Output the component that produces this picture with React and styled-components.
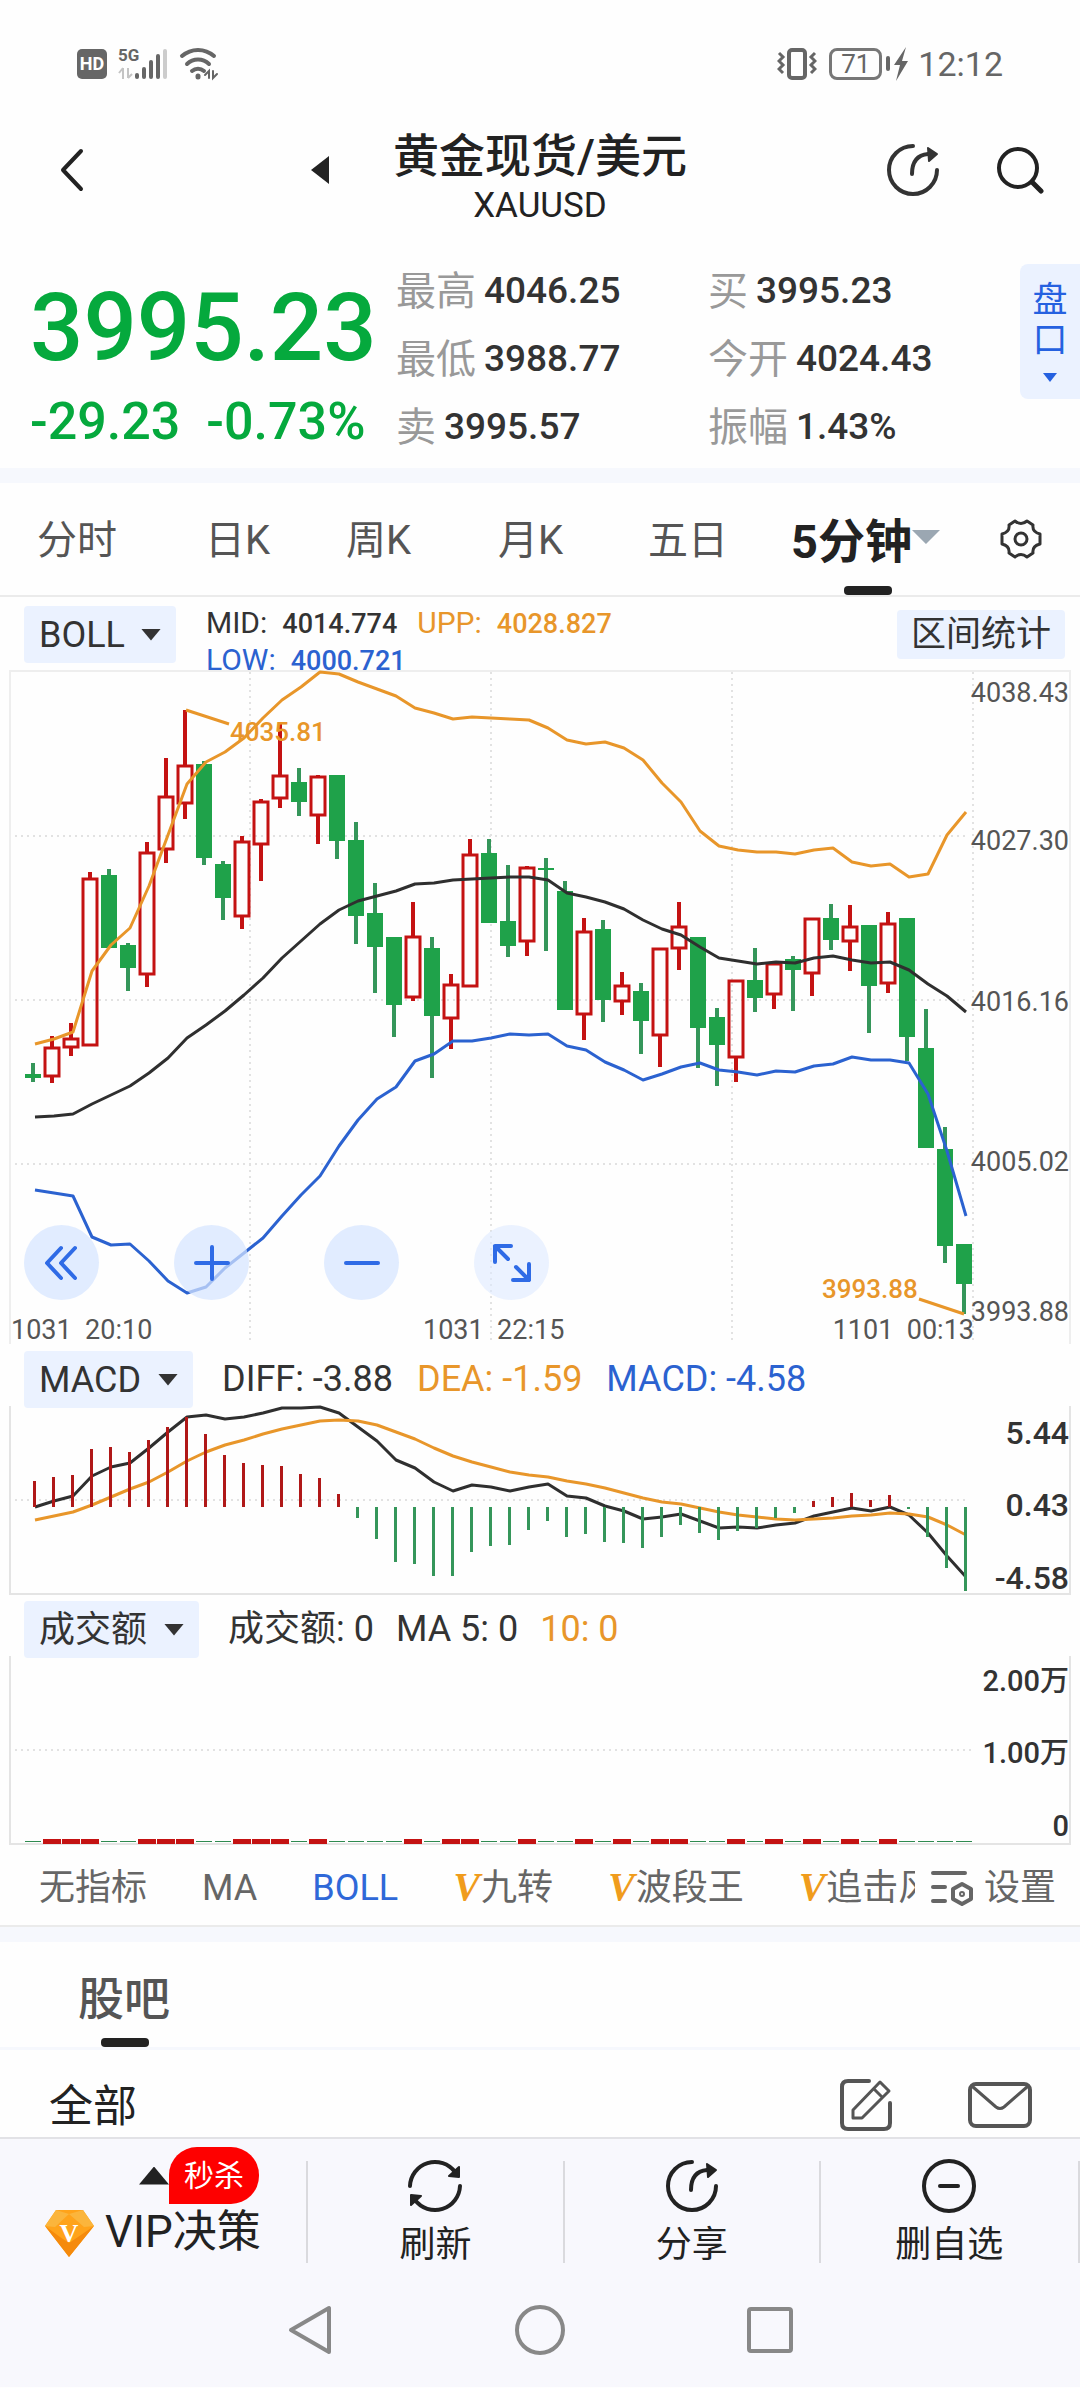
import React from 'react'
import styled, { createGlobalStyle } from 'styled-components'

const GlobalStyle = createGlobalStyle`
  * { box-sizing: border-box; }
  body {
    margin: 0;
    background: #fefefe;
    color: #222;
    font-family: Roboto, "Noto Sans CJK SC", sans-serif;
  }
  button, select {
    margin: 0;
    padding: 0;
    border: 0;
    background: none;
    color: inherit;
    font: inherit;
  }
`

/* ---------- chart data ---------- */

// [direction, high, body top, body bottom, low]
const CANDLES = [
  ['d', 403, 414, 418, 422], ['u', 376, 387, 417, 423], ['u', 363, 378, 388, 396],
  ['u', 212, 218, 386, 386], ['d', 209, 215, 288, 288], ['d', 283, 285, 308, 331],
  ['u', 182, 192, 315, 327], ['u', 98, 136, 190, 203], ['u', 50, 105, 144, 159],
  ['d', 101, 104, 198, 205], ['d', 201, 204, 238, 260], ['u', 176, 181, 257, 269],
  ['u', 139, 141, 185, 221], ['u', 62, 115, 139, 148], ['d', 108, 122, 142, 156],
  ['u', 115, 116, 156, 184], ['d', 115, 115, 181, 199], ['d', 162, 180, 256, 284],
  ['d', 223, 253, 287, 333], ['d', 277, 277, 345, 377], ['u', 242, 276, 338, 341],
  ['d', 277, 288, 356, 418], ['u', 314, 324, 359, 389], ['u', 179, 194, 327, 327],
  ['d', 179, 193, 263, 263], ['d', 205, 261, 286, 297], ['u', 206, 207, 282, 296],
  ['d', 198, 208, 210, 291], ['d', 221, 231, 350, 350], ['u', 258, 271, 355, 380],
  ['d', 260, 269, 340, 362], ['u', 312, 325, 342, 355], ['d', 323, 331, 361, 394],
  ['u', 288, 288, 376, 407], ['u', 242, 266, 289, 310], ['d', 277, 277, 368, 408],
  ['d', 348, 357, 385, 426], ['u', 320, 320, 398, 422], ['d', 288, 320, 338, 352],
  ['u', 303, 303, 335, 349], ['d', 296, 299, 310, 351], ['u', 258, 258, 314, 336],
  ['d', 244, 258, 280, 290], ['u', 245, 266, 282, 311], ['d', 265, 265, 326, 373],
  ['u', 252, 263, 324, 333], ['d', 258, 258, 377, 401], ['d', 349, 388, 488, 488],
  ['d', 467, 489, 586, 603], ['d', 584, 584, 624, 654],
]

const UPP = [
  384, 379, 372, 311, 285, 268, 226, 175, 124, 102, 92, 78, 58, 40, 27, 12, 14, 22, 29, 36,
  48, 53, 59, 57, 58, 59, 60, 68, 80, 84, 82, 88, 100, 123, 142, 171, 186, 190, 192, 192,
  194, 190, 188, 202, 206, 204, 217, 214, 175, 152,
]
const MID = [
  457, 456, 454, 444, 435, 426, 413, 398, 378, 365, 351, 335, 318, 298, 281, 264, 250, 241, 236, 231,
  224, 223, 220, 219, 218, 217, 217, 220, 233, 237, 242, 249, 260, 269, 275, 287, 298, 301, 304, 302,
  303, 298, 296, 300, 303, 302, 310, 324, 336, 352,
]
const LOW = [
  530, 533, 536, 577, 585, 584, 601, 621, 633, 627, 608, 593, 578, 556, 535, 516, 486, 460, 439, 427,
  401, 394, 381, 381, 378, 374, 375, 374, 386, 390, 402, 410, 420, 414, 407, 403, 410, 412, 415, 411,
  412, 406, 404, 397, 400, 400, 403, 434, 491, 556,
]

const MACD_ZERO = 167
const MACD_BARS = [
  141, 137, 135, 109, 107, 112, 100, 87, 77, 94, 115, 123, 125, 126, 134, 138, 154, 178, 199, 222,
  224, 236, 236, 212, 206, 205, 190, 181, 197, 194, 202, 203, 208, 197, 185, 193, 200, 191, 188, 178,
  173, 161, 157, 153, 160, 155, 169, 197, 228, 251,
]
const DIFF = [
  167, 161, 156, 136, 127, 123, 108, 92, 77, 75, 79, 77, 73, 68, 68, 67, 73, 87, 101, 120,
  128, 142, 151, 145, 147, 151, 147, 144, 156, 158, 166, 171, 179, 177, 174, 181, 188, 187, 188, 185,
  183, 176, 172, 168, 171, 167, 175, 193, 216, 237,
]
const DEA = [
  180, 176, 172, 165, 157, 149, 142, 132, 121, 112, 105, 100, 94, 89, 85, 81, 80, 81, 85, 92,
  99, 108, 116, 122, 127, 132, 135, 137, 141, 144, 148, 153, 158, 162, 164, 168, 172, 175, 177, 179,
  180, 179, 178, 176, 175, 173, 174, 177, 185, 195,
]

const RED = '#c41212'
const GREEN = '#1fa24a'
const ORANGE = '#e8962a'
const BLUE = '#2b62d0'
const DARK = '#2f2f2f'

const STEP = 19
const candleX = i => 33 + i * STEP
const lineX = i => 35 + i * STEP
const toPoints = values => values.map((y, i) => `${lineX(i)},${y}`).join(' ')

/* ---------- shared parts ---------- */

const Page = styled.main`
  width: 100%;
  background: #fefefe;
`

const Divider = styled.div`
  height: ${props => props.$height || 15}px;
  background: #f6f8fd;
`

const IconButton = styled.button`
  display: flex;
  align-items: center;
  justify-content: ${props => (props.$start ? 'flex-start' : 'center')};
  color: ${props => props.$color || '#222'};
`

const Svg = styled.svg`
  display: block;
  flex: none;
  fill: none;
  stroke: currentColor;
  stroke-width: ${props => props.$stroke || 4};
  stroke-linecap: round;
  stroke-linejoin: round;
`

const Triangle = styled.span`
  flex: none;
  width: ${props => props.$w}px;
  height: ${props => props.$h}px;
  background: ${props => props.$color || '#222'};
  clip-path: ${props =>
    ({
      down: 'polygon(0 0, 100% 0, 50% 100%)',
      up: 'polygon(50% 0, 100% 100%, 0 100%)',
      left: 'polygon(100% 0, 100% 100%, 0 50%)',
    })[props.$dir || 'down']};
`

const ShareIcon = () => (
  <Svg width="54" height="54" viewBox="0 0 54 54" $stroke={4}>
    <path d="M27 3 A24 24 0 1 0 51 27" />
    <path d="M26 31 C26 19 31 12 42 11" />
    <path d="M42 5 L51 11 L43 18 Z" fill="currentColor" strokeWidth="2" />
  </Svg>
)

/* ---------- status bar ---------- */

const StatusBar = styled.div`
  display: flex;
  align-items: center;
  justify-content: space-between;
  height: 100px;
  padding: 28px 77px 0;
  color: #666;
`

const StatusGroup = styled.div`
  display: flex;
  align-items: center;
  gap: ${props => props.$gap}px;
`

const HdBadge = styled.span`
  width: 30px;
  height: 30px;
  border-radius: 5px;
  background: #666;
  color: #fff;
  font-size: 18px;
  font-weight: 700;
  line-height: 30px;
  text-align: center;
`

const Battery = styled.span`
  width: 53px;
  height: 32px;
  margin-left: 8px;
  border: 3px solid #777;
  border-radius: 8px;
  font-size: 26px;
  line-height: 26px;
  text-align: center;
`

const Clock = styled.time`
  margin-left: 4px;
  font-size: 34px;
  line-height: 36px;
`

const SignalIcon = () => (
  <svg width="52" height="34" viewBox="0 0 52 34" overflow="visible">
    <text x="1" y="14" fontSize="17" fontWeight="700" fill="#666">5G</text>
    <path d="M6 21 V32 M6 21 L2 26 M11 21 V31 M11 31 L15 27" stroke="#c4c4c4" strokeWidth="2" fill="none" />
    <g fill="#666">
      <rect x="18" y="26" width="4" height="6" rx="2" />
      <rect x="25" y="20" width="4" height="12" rx="2" />
      <rect x="32" y="13" width="4" height="19" rx="2" />
      <rect x="39" y="7" width="4" height="25" rx="2" />
    </g>
    <rect x="46" y="2" width="4" height="30" rx="2" fill="#ccc" />
  </svg>
)

const WifiIcon = () => (
  <svg width="40" height="34" viewBox="0 0 40 34" fill="none" stroke="#666" strokeWidth="4" strokeLinecap="round">
    <path d="M3 9 A24 24 0 0 1 35 9" />
    <path d="M8 17 A16 16 0 0 1 30 17" />
    <path d="M13 24 A9 9 0 0 1 25 24" />
    <path d="M19 29 V30" strokeWidth="5" />
    <path d="M26 28 L30 24 V31 M34 24 V31 L38 27" strokeWidth="2" />
  </svg>
)

const VibrateIcon = () => (
  <svg width="40" height="34" viewBox="0 0 40 34" fill="none" stroke="#666" strokeWidth="4">
    <rect x="12" y="3" width="16" height="28" rx="3" />
    <path d="M2 6 L6 10 L2 14 L6 18 L2 22 L6 26" strokeWidth="3" />
    <path d="M38 6 L34 10 L38 14 L34 18 L38 22 L34 26" strokeWidth="3" />
  </svg>
)

const BoltIcon = () => (
  <svg width="24" height="34" viewBox="0 0 24 34" fill="#666">
    <rect x="0" y="9" width="4" height="15" rx="2" />
    <path d="M20 0 L8 18 H14 L10 34 L22 14 H16 Z" />
  </svg>
)

/* ---------- header ---------- */

const Header = styled.header`
  display: grid;
  grid-template-columns: 1fr auto 1fr;
  align-items: center;
  height: 140px;
`

const HeaderSide = styled.div`
  display: flex;
  align-items: center;
  justify-content: ${props => (props.$end ? 'flex-end' : 'space-between')};
  gap: 56px;
  padding: ${props => (props.$end ? '0 36px 0 0' : '0 64px 0 60px')};
`

const TitleBlock = styled.div`
  padding-top: 20px;
  text-align: center;
`

const Title = styled.h1`
  margin: 0;
  font-size: 46px;
  font-weight: 500;
  line-height: 52px;
`

const Symbol = styled.p`
  margin: 0;
  font-size: 35px;
  line-height: 48px;
`

/* ---------- quote ---------- */

const Quote = styled.section`
  display: grid;
  grid-template-columns: 396fr 312fr 312fr 60px;
  height: 228px;
`

const PriceBlock = styled.div`
  display: flex;
  flex-direction: column;
  gap: 14px;
  padding: 38px 0 0 30px;
  color: #05a93d;
  font-weight: 500;
`

const Price = styled.strong`
  font-size: 94px;
  font-weight: 500;
  line-height: 100px;
`

const Change = styled.div`
  display: flex;
  gap: 26px;
  font-size: 52px;
  line-height: 60px;
`

const StatList = styled.dl`
  margin: 0;
  padding-top: 16px;
`

const Stat = styled.div`
  display: flex;
  align-items: center;
  gap: 8px;
  height: 68px;
`

const StatLabel = styled.dt`
  padding-bottom: 4px;
  color: #999;
  font-size: 40px;
`

const StatValue = styled.dd`
  margin: 0;
  color: #333;
  font-size: 37px;
  font-weight: 500;
`

const SideTab = styled.button`
  display: flex;
  flex-direction: column;
  align-items: center;
  justify-content: center;
  gap: 12px;
  height: 135px;
  margin-top: 24px;
  border-radius: 8px 0 0 8px;
  background: #ebf2ff;
  color: #2561e0;
  font-size: 35px;
  line-height: 40px;
`

const SideText = styled.span`
  width: 36px;
`

const QUOTE_STATS = [
  [['最高', '4046.25'], ['最低', '3988.77'], ['卖', '3995.57']],
  [['买', '3995.23'], ['今开', '4024.43'], ['振幅', '1.43%']],
]

/* ---------- period tabs ---------- */

const PeriodTabs = styled.nav`
  display: grid;
  grid-template-columns: 168fr 141fr 152fr 150fr 143fr 209fr 80fr;
  height: 114px;
  padding-left: 37px;
  border-bottom: 2px solid #ebebeb;
`

const PeriodTab = styled.button`
  position: relative;
  display: flex;
  align-items: center;
  padding-bottom: 4px;
  color: ${props => (props.$active ? '#222' : '#555')};
  font-size: ${props => (props.$active ? 47 : 40)}px;
  font-weight: ${props => (props.$active ? 700 : 400)};
  white-space: nowrap;
`

const Underline = styled.span`
  position: absolute;
  bottom: 0;
  left: ${props => props.$left}px;
  width: 48px;
  height: 9px;
  border-radius: 4px;
  background: #222;
`

const PERIODS = ['分时', '日K', '周K', '月K', '五日']

/* ---------- chart panels ---------- */

const PanelHead = styled.div`
  display: flex;
  align-items: flex-start;
  height: 61px;
  padding: 6px 15px 0 24px;
`

const MainPanelHead = styled(PanelHead)`
  align-items: center;
  height: 73px;
  padding-top: 2px;
`

const Picker = styled.label`
  display: flex;
  align-items: center;
  gap: 16px;
  flex: none;
  height: 57px;
  padding: 0 15px;
  border-radius: 4px;
  background: #ebf2ff;
  color: #333;
`

const PickerSelect = styled.select`
  appearance: none;
  font-size: 36px;
  line-height: 56px;
`

const RangeButton = styled.button`
  height: 49px;
  margin-left: auto;
  padding: 0 14px;
  border-radius: 4px;
  background: #ebf2ff;
  color: #333;
  font-size: 35px;
  line-height: 49px;
`

const BollLegend = styled.div`
  display: flex;
  flex-wrap: wrap;
  column-gap: 20px;
  width: 480px;
  padding: 14px 0 0 30px;
`

const BollItem = styled.span`
  display: flex;
  align-items: baseline;
  gap: 15px;
  color: ${props => props.$color};
  font-size: 30px;
  line-height: 36px;
`

const BollValue = styled.b`
  font-size: 27px;
  font-weight: 500;
`

const Legend = styled.div`
  display: flex;
  gap: ${props => props.$gap}px;
  padding-left: 29px;
  font-size: 36px;
  line-height: 57px;
`

const LegendItem = styled.span`
  color: ${props => props.$color || '#333'};
`

const ChartArea = styled.div`
  position: relative;
`

const Chart = styled.svg`
  display: block;
  width: 100%;
  height: auto;
  overflow: visible;
`

const ChartText = styled.text`
  fill: ${props => props.$color || '#555'};
  font-size: ${props => props.$size || 27}px;
  font-weight: ${props => props.$weight || 400};
  text-anchor: ${props => (props.$end ? 'end' : 'start')};
  white-space: pre;
`

const GridLine = styled.path`
  fill: none;
  stroke: #e2e2e2;
  stroke-width: 2;
  stroke-dasharray: 2 4;
`

const Frame = styled.path`
  fill: none;
  stroke: ${props => props.$color || '#e4e4e4'};
  stroke-width: 2;
`

const Curve = styled.polyline`
  fill: none;
  stroke: ${props => props.$color};
  stroke-width: 3;
  stroke-linejoin: round;
`

const ChartTools = styled.div`
  position: absolute;
  bottom: 45px;
  left: 24px;
  display: flex;
  gap: 75px;
`

const ToolButton = styled.button`
  display: flex;
  align-items: center;
  justify-content: center;
  width: 75px;
  height: 75px;
  border-radius: 50%;
  background: ${props => (props.$light ? 'rgba(222, 233, 255, 0.6)' : 'rgba(214, 228, 255, 0.72)')};
  color: #2f6be6;
`

const IndicatorPicker = ({ label, value }) => (
  <Picker>
    <PickerSelect aria-label={label} defaultValue={value}>
      <option>{value}</option>
    </PickerSelect>
    <Triangle $w={20} $h={12} $color="#333" />
  </Picker>
)

const Candle = ({ x, candle }) => {
  const [dir, high, top, bottom, low] = candle
  if (dir === 'd') {
    return (
      <g fill={GREEN}>
        <rect x={x - 2} y={high} width="4" height={low - high} fill="#35965a" />
        <rect x={x - 8} y={top} width="16" height={bottom - top} />
      </g>
    )
  }
  return (
    <g stroke={RED} strokeWidth="3" fill="none">
      <path d={`M${x} ${high} V${top} M${x} ${bottom} V${low}`} strokeWidth="4" />
      <rect x={x - 7} y={top + 1} width="14" height={bottom - top - 2} />
    </g>
  )
}

const PriceChart = () => (
  <Chart viewBox="0 10 1080 675" role="img" aria-label="BOLL">
    <Frame d="M10 684 V11 H1070 V684" $color="#eee" />
    <GridLine d="M15 176 H968 M15 340 H968 M15 504 H968" />
    <GridLine d="M250 12 V684 M491 12 V684 M732 12 V684 M973 12 V684" />
    {CANDLES.map((candle, i) => (
      <Candle key={i} x={candleX(i)} candle={candle} />
    ))}
    <Curve points={toPoints(UPP)} $color={ORANGE} />
    <Curve points={toPoints(MID)} $color={DARK} />
    <Curve points={toPoints(LOW)} $color={BLUE} />
    <Curve points="186,50 229,64" $color={ORANGE} />
    <Curve points="919,639 964,654" $color={ORANGE} />
    <ChartText x="230" y="81" $color={ORANGE} $size={26} $weight={500}>4035.81</ChartText>
    <ChartText x="822" y="638" $color={ORANGE} $size={26} $weight={500}>3993.88</ChartText>
    <ChartText x="1069" y="42" $end>4038.43</ChartText>
    <ChartText x="1069" y="190" $end>4027.30</ChartText>
    <ChartText x="1069" y="351" $end>4016.16</ChartText>
    <ChartText x="1069" y="511" $end>4005.02</ChartText>
    <ChartText x="1069" y="661" $end>3993.88</ChartText>
    <ChartText x="11" y="679">1031  20:10</ChartText>
    <ChartText x="423" y="679">1031  22:15</ChartText>
    <ChartText x="974" y="679" $end>1101  00:13</ChartText>
  </Chart>
)

const MacdChart = () => (
  <Chart viewBox="0 66 1080 189" role="img" aria-label="MACD">
    <Frame d="M10 66 V254 H1070 V66" />
    <GridLine d="M15 160 H968" />
    <Curve points={toPoints(DIFF)} $color={DARK} />
    <Curve points={toPoints(DEA)} $color={ORANGE} />
    {MACD_BARS.map((y, i) => (
      <rect
        key={i}
        x={lineX(i) - 2}
        y={Math.min(y, MACD_ZERO)}
        width="3"
        height={Math.abs(y - MACD_ZERO)}
        fill={y < MACD_ZERO ? '#b01818' : '#35965a'}
      />
    ))}
    <ChartText x="1069" y="104" $color="#333" $size={32} $weight={500} $end>5.44</ChartText>
    <ChartText x="1069" y="176" $color="#333" $size={32} $weight={500} $end>0.43</ChartText>
    <ChartText x="1069" y="249" $color="#333" $size={32} $weight={500} $end>-4.58</ChartText>
  </Chart>
)

const VolumeChart = () => (
  <Chart viewBox="0 6 1080 191" role="img" aria-label="成交额">
    <Frame d="M10 6 V194 H1070 V6" />
    <GridLine d="M15 100 H973" />
    {CANDLES.map(([dir], i) =>
      dir === 'u' ? (
        <rect key={i} x={candleX(i) - 9} y="189" width="18" height="5" fill={RED} />
      ) : (
        <rect key={i} x={candleX(i) - 8} y="191" width="16" height="1" fill="#2f8a50" />
      )
    )}
    <ChartText x="1069" y="41" $color="#333" $size={29} $weight={500} $end>2.00万</ChartText>
    <ChartText x="1069" y="113" $color="#333" $size={29} $weight={500} $end>1.00万</ChartText>
    <ChartText x="1069" y="186" $color="#333" $size={29} $weight={500} $end>0</ChartText>
  </Chart>
)

/* ---------- indicator strip ---------- */

const IndicatorBar = styled.nav`
  display: flex;
  align-items: center;
  height: 80px;
  padding: 4px 24px 0 39px;
  border-bottom: 2px solid #ebebeb;
`

const IndicatorScroll = styled.div`
  display: flex;
  flex: 1;
  gap: 55px;
  min-width: 0;
  overflow: hidden;
`

const Indicator = styled.button`
  flex: none;
  color: ${props => (props.$active ? '#2f68d8' : '#666')};
  font-size: 36px;
  line-height: 54px;
  white-space: nowrap;
`

const VipMark = styled.i`
  margin-right: 1px;
  color: #f09c1c;
  font-family: "Liberation Serif", serif;
  font-size: 40px;
  font-weight: 700;
  line-height: 40px;
`

const SettingsButton = styled(Indicator)`
  display: flex;
  align-items: center;
  gap: 10px;
  margin-left: 16px;
`

const INDICATORS = [
  { name: '无指标' },
  { name: 'MA' },
  { name: 'BOLL', active: true },
  { name: '九转', vip: true },
  { name: '波段王', vip: true },
  { name: '追击风', vip: true },
]

/* ---------- forum ---------- */

const ForumTabs = styled.div`
  height: 105px;
  padding-left: 78px;
`

const ForumTab = styled.button`
  position: relative;
  height: 105px;
  color: #555;
  font-size: 46px;
  font-weight: 500;
`

const ForumBar = styled.div`
  display: flex;
  align-items: center;
  gap: 74px;
  height: 87px;
  padding: 22px 47px 0 49px;
`

const ForumFilter = styled.button`
  margin-right: auto;
  padding-top: 4px;
  font-size: 44px;
  line-height: 56px;
`

/* ---------- bottom ---------- */

const Footer = styled.footer`
  border-top: 2px solid #e2e2e6;
  background: #f8f8fd;
`

const ActionBar = styled.div`
  display: grid;
  grid-template-columns: 308fr 256fr 256fr 259fr;
  padding: 22px 0 12px;
`

const Action = styled.button`
  display: flex;
  flex-direction: column;
  align-items: center;
  justify-content: center;
  gap: 12px;
  height: 102px;
  border-right: 2px solid #dadade;
  font-size: 36px;
  line-height: 40px;
`

const VipAction = styled(Action)`
  position: relative;
  flex-direction: row;
  align-items: flex-end;
  justify-content: flex-start;
  gap: 10px;
  padding: 0 0 6px 44px;
  font-size: 44px;
  line-height: 50px;
`

const VipTip = styled.span`
  position: absolute;
  top: -14px;
  left: 139px;
  display: flex;
  align-items: center;
`

const Badge = styled.span`
  height: 57px;
  padding: 0 15px;
  border-radius: 28px 28px 28px 0;
  background: #fe0000;
  color: #fff;
  font-size: 30px;
  line-height: 57px;
`

const SystemNav = styled.nav`
  display: flex;
  justify-content: center;
  gap: 182px;
  height: 112px;
  padding: 30px 0 32px 0;
`

export default function App() {
  return (
    <>
      <GlobalStyle />
      <Page lang="zh-CN">
        <StatusBar>
          <StatusGroup $gap={10}>
            <HdBadge>HD</HdBadge>
            <SignalIcon />
            <WifiIcon />
          </StatusGroup>
          <StatusGroup $gap={4}>
            <VibrateIcon />
            <Battery>71</Battery>
            <BoltIcon />
            <Clock>12:12</Clock>
          </StatusGroup>
        </StatusBar>

        <Header>
          <HeaderSide>
            <IconButton aria-label="返回">
              <Svg width="24" height="44" viewBox="0 0 24 44" $stroke={4}>
                <path d="M21 3 L3 22 L21 41" />
              </Svg>
            </IconButton>
            <IconButton aria-label="上一个">
              <Triangle $dir="left" $w={18} $h={28} />
            </IconButton>
          </HeaderSide>
          <TitleBlock>
            <Title>黄金现货/美元</Title>
            <Symbol>XAUUSD</Symbol>
          </TitleBlock>
          <HeaderSide $end>
            <IconButton aria-label="分享" $color="#333">
              <ShareIcon />
            </IconButton>
            <IconButton aria-label="搜索">
              <Svg width="48" height="48" viewBox="0 0 48 48" $stroke={4}>
                <circle cx="22" cy="22" r="19" />
                <path d="M36 36 L45 45" strokeWidth="5" />
              </Svg>
            </IconButton>
          </HeaderSide>
        </Header>

        <Quote>
          <PriceBlock>
            <Price>3995.23</Price>
            <Change>
              <span>-29.23</span>
              <span>-0.73%</span>
            </Change>
          </PriceBlock>
          {QUOTE_STATS.map((stats, i) => (
            <StatList key={i}>
              {stats.map(([label, value]) => (
                <Stat key={label}>
                  <StatLabel>{label}</StatLabel>
                  <StatValue>{value}</StatValue>
                </Stat>
              ))}
            </StatList>
          ))}
          <SideTab>
            <SideText>盘口</SideText>
            <Triangle $w={14} $h={9} $color="#2561e0" />
          </SideTab>
        </Quote>

        <Divider />

        <PeriodTabs>
          {PERIODS.map(name => (
            <PeriodTab key={name}>{name}</PeriodTab>
          ))}
          <PeriodTab $active>
            5分钟
            <Triangle $w={28} $h={14} $color="#9ba7b2" />
            <Underline $left={53} />
          </PeriodTab>
          <IconButton aria-label="图表设置" $start $color="#333">
            <Svg width="42" height="42" viewBox="0 0 42 42" $stroke={3}>
              <path d="M15 3 Q21 8 27 3 L33 7 Q32 14 40 16 V26 Q32 28 33 35 L27 39 Q21 34 15 39 L9 35 Q10 28 2 26 V16 Q10 14 9 7 Z" />
              <circle cx="21" cy="21" r="6" />
            </Svg>
          </IconButton>
        </PeriodTabs>

        <MainPanelHead>
          <IndicatorPicker label="主图指标" value="BOLL" />
          <BollLegend>
            <BollItem $color="#333">
              MID: <BollValue>4014.774</BollValue>
            </BollItem>
            <BollItem $color={ORANGE}>
              UPP: <BollValue>4028.827</BollValue>
            </BollItem>
            <BollItem $color={BLUE}>
              LOW: <BollValue>4000.721</BollValue>
            </BollItem>
          </BollLegend>
          <RangeButton>区间统计</RangeButton>
        </MainPanelHead>
        <ChartArea>
          <PriceChart />
          <ChartTools>
            <ToolButton aria-label="左移">
              <Svg width="34" height="36" viewBox="0 0 34 36" $stroke={4}>
                <path d="M16 3 L2 18 L16 33 M30 3 L16 18 L30 33" />
              </Svg>
            </ToolButton>
            <ToolButton aria-label="放大">
              <Svg width="36" height="36" viewBox="0 0 36 36" $stroke={4}>
                <path d="M2 18 H34 M18 2 V34" />
              </Svg>
            </ToolButton>
            <ToolButton aria-label="缩小">
              <Svg width="36" height="36" viewBox="0 0 36 36" $stroke={4}>
                <path d="M2 18 H34" />
              </Svg>
            </ToolButton>
            <ToolButton aria-label="全屏" $light>
              <Svg width="40" height="40" viewBox="0 0 40 40" $stroke={4}>
                <path d="M3 19 V3 H19 M3 3 L16 16 M37 21 V37 H21 M37 37 L24 24" />
              </Svg>
            </ToolButton>
          </ChartTools>
        </ChartArea>

        <PanelHead>
          <IndicatorPicker label="副图指标一" value="MACD" />
          <Legend $gap={24}>
            <LegendItem>DIFF: -3.88</LegendItem>
            <LegendItem $color={ORANGE}>DEA: -1.59</LegendItem>
            <LegendItem $color={BLUE}>MACD: -4.58</LegendItem>
          </Legend>
        </PanelHead>
        <MacdChart />

        <PanelHead>
          <IndicatorPicker label="副图指标二" value="成交额" />
          <Legend $gap={22}>
            <LegendItem>成交额: 0</LegendItem>
            <LegendItem>MA 5: 0</LegendItem>
            <LegendItem $color={ORANGE}>10: 0</LegendItem>
          </Legend>
        </PanelHead>
        <VolumeChart />

        <IndicatorBar>
          <IndicatorScroll>
            {INDICATORS.map(({ name, active, vip }) => (
              <Indicator key={name} $active={active}>
                {vip && <VipMark>V</VipMark>}
                {name}
              </Indicator>
            ))}
          </IndicatorScroll>
          <SettingsButton>
            <Svg width="43" height="36" viewBox="0 0 43 36" $stroke={4}>
              <path d="M2 3 H34 M2 17 H14 M2 31 H14" />
              <path d="M31 14 L40 19 V29 L31 34 L22 29 V19 Z" />
              <circle cx="31" cy="24" r="1" />
            </Svg>
            设置
          </SettingsButton>
        </IndicatorBar>

        <Divider />

        <ForumTabs>
          <ForumTab>
            股吧
            <Underline $left={23} />
          </ForumTab>
        </ForumTabs>
        <Divider $height={3} />
        <ForumBar>
          <ForumFilter>全部</ForumFilter>
          <IconButton aria-label="发帖" $color="#555">
            <Svg width="54" height="54" viewBox="0 0 54 54" $stroke={4}>
              <path d="M30 3 H9 Q3 3 3 9 V45 Q3 51 9 51 H45 Q51 51 51 45 V25" />
              <path d="M14 40 V32 L41 4 L50 13 L23 40 Z M35 11 L43 19" strokeWidth="3" />
            </Svg>
          </IconButton>
          <IconButton aria-label="消息" $color="#555">
            <Svg width="66" height="48" viewBox="0 0 66 48" $stroke={4}>
              <rect x="3" y="3" width="60" height="42" rx="6" />
              <path d="M6 6 L29 26 Q33 29 37 26 L60 6" strokeWidth="3" />
            </Svg>
          </IconButton>
        </ForumBar>

        <Footer>
          <ActionBar>
            <VipAction>
              <VipTip>
                <Triangle $dir="up" $w={30} $h={18} />
                <Badge>秒杀</Badge>
              </VipTip>
              <svg width="51" height="48" viewBox="0 0 51 48">
                <path d="M12 1 H39 L50 17 L25 48 L1 17 Z" fill="#ffa31a" />
                <path d="M12 1 L25 5 L39 1 L50 17 L40 18 L25 5 L11 18 L1 17 Z" fill="#fbb53c" />
                <path d="M25 34 L34 28 L50 17 L25 48 L1 17 L16 28 Z" fill="#f58a0c" />
                <text x="25" y="33" fontSize="26" fontWeight="700" fontFamily="Liberation Serif, serif" textAnchor="middle" fill="#fff">V</text>
              </svg>
              VIP决策
            </VipAction>
            <Action>
              <Svg width="54" height="54" viewBox="0 0 54 54" $stroke={4}>
                <path d="M2 27 A25 25 0 0 1 47 13" />
                <path d="M52 27 A25 25 0 0 1 7 41" />
                <path d="M51 8 V18 L41 17 Z" fill="currentColor" strokeWidth="2" />
                <path d="M3 46 V36 L13 37 Z" fill="currentColor" strokeWidth="2" />
              </Svg>
              刷新
            </Action>
            <Action>
              <ShareIcon />
              分享
            </Action>
            <Action>
              <Svg width="54" height="54" viewBox="0 0 54 54" $stroke={4}>
                <circle cx="27" cy="27" r="25" />
                <path d="M18 27 H36" />
              </Svg>
              删自选
            </Action>
          </ActionBar>
          <SystemNav>
            <IconButton aria-label="后退" $color="#888">
              <Svg width="46" height="50" viewBox="0 0 46 50" $stroke={4}>
                <path d="M42 3 V47 L4 25 Z" />
              </Svg>
            </IconButton>
            <IconButton aria-label="主页" $color="#888">
              <Svg width="50" height="50" viewBox="0 0 50 50" $stroke={4}>
                <circle cx="25" cy="25" r="23" />
              </Svg>
            </IconButton>
            <IconButton aria-label="最近任务" $color="#888">
              <Svg width="46" height="46" viewBox="0 0 46 46" $stroke={4}>
                <rect x="2" y="2" width="42" height="42" rx="2" />
              </Svg>
            </IconButton>
          </SystemNav>
        </Footer>
      </Page>
    </>
  )
}
